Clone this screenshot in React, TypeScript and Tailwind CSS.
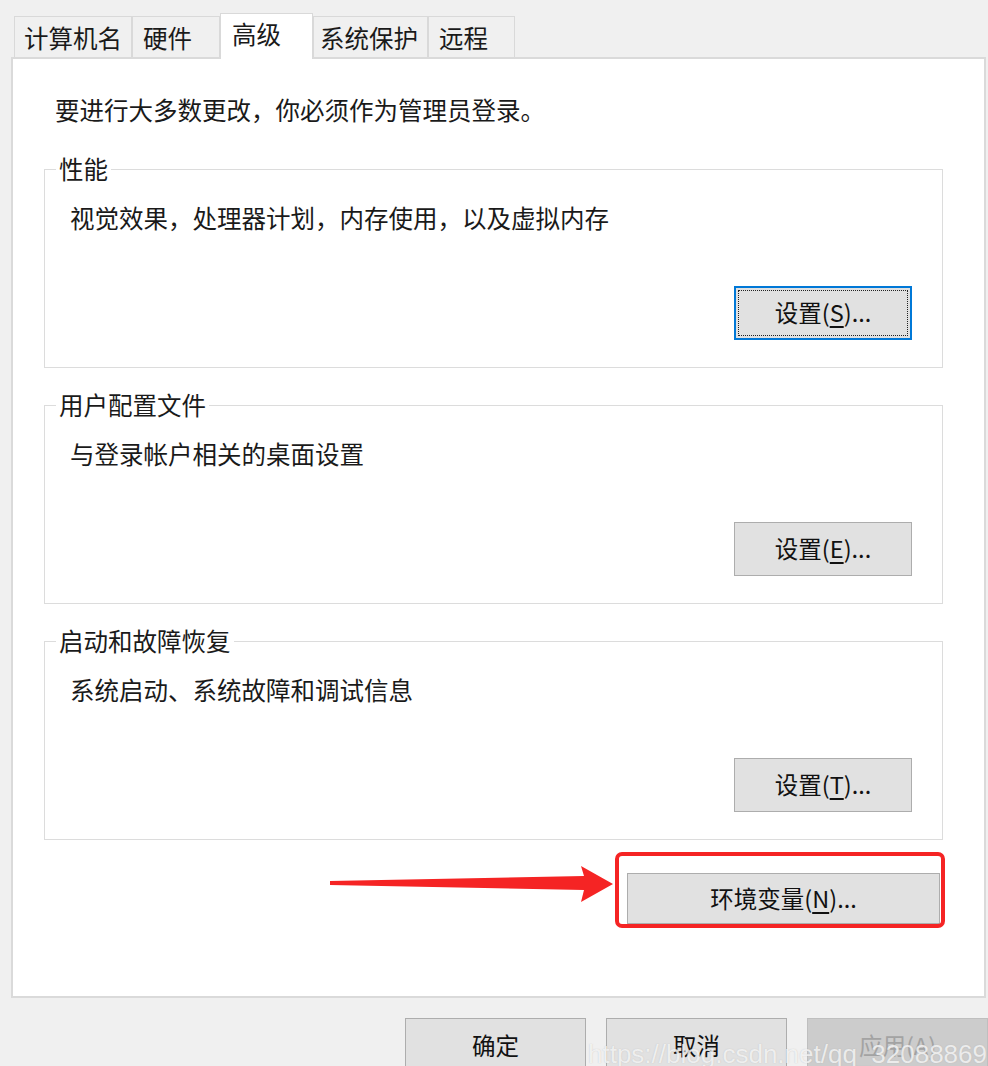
import React from "react";

const FONT = { fontFamily: '"Noto Sans CJK SC", "Noto Sans", sans-serif' };

function Tab({ label, w, selected, pl }: { label: string; w: number; selected?: boolean; pl: number }) {
  if (selected) {
    return (
      <div
        className="relative z-10 -mb-[2px] h-[46px] border border-b-0 border-[#d9d9d9] bg-white text-[24.5px] leading-[40px] text-[#1a1a1a]"
        style={{ width: w, paddingLeft: pl }}
      >
        {label}
      </div>
    );
  }
  return (
    <div
      className="h-[41px] border border-b-0 border-[#d9d9d9] bg-[#f0f0f0] text-[24.5px] leading-[42px] text-[#1a1a1a]"
      style={{ width: w, paddingLeft: pl }}
    >
      {label}
    </div>
  );
}

function Btn({ children, focused, w = 178, h = 54 }: { children: React.ReactNode; focused?: boolean; w?: number; h?: number }) {
  if (focused) {
    return (
      <div
        className="flex border-2 border-[#0078d7] bg-[#e1e1e1] p-[2px]"
        style={{ width: w, height: h }}
      >
        <div className="flex flex-1 items-center justify-center border border-dotted border-[#222] text-[23.5px] text-[#111]">
          {children}
        </div>
      </div>
    );
  }
  return (
    <div
      className="flex items-center justify-center border border-[#adadad] bg-[#e1e1e1] text-[23.5px] text-[#111]"
      style={{ width: w, height: h }}
    >
      {children}
    </div>
  );
}

function Group({ title, text, btn, focused }: { title: string; text: string; btn: React.ReactNode; focused?: boolean }) {
  return (
    <div className="relative ml-[31px] mr-[41px] flex h-[199px] flex-col border border-[#dcdcdc] pl-[25px] pr-[30px] pt-[34px]">
      <span className="absolute -top-[15px] left-[11px] bg-white px-[3px] text-[24.5px] leading-[28px] text-[#1a1a1a]">
        {title}
      </span>
      <div className="text-[24.5px] leading-[28px] text-[#1a1a1a]">{text}</div>
      <div className="mt-[54px] flex justify-end">
        <Btn focused={focused}>{btn}</Btn>
      </div>
    </div>
  );
}

export default function App() {
  return (
    <div className="relative h-[1066px] w-[988px] overflow-hidden bg-[#f0f0f0]" style={FONT}>
      {/* tabs */}
      <div className="flex items-end pl-[14px] pt-[13px]">
        <Tab label="计算机名" w={118} pl={9} />
        <Tab label="硬件" w={88} pl={10} />
        <Tab label="高级" w={93} pl={11} selected />
        <Tab label="系统保护" w={115} pl={6} />
        <Tab label="远程" w={87} pl={10} />
      </div>

      {/* panel */}
      <div className="mx-[11px] mr-[2px] h-[941px] border-2 border-[#dadada] bg-white">
        <div className="pl-[42px] pt-[37px] text-[24.5px] leading-[28px] text-[#1a1a1a]">
          要进行大多数更改，你必须作为管理员登录。
        </div>
        <div className="mt-[45px] flex flex-col gap-[37px]">
          <Group
            title="性能"
            text="视觉效果，处理器计划，内存使用，以及虚拟内存"
            focused
            btn={
              <span>
                设置(<span className="underline underline-offset-4">S</span>)...
              </span>
            }
          />
          <Group
            title="用户配置文件"
            text="与登录帐户相关的桌面设置"
            btn={
              <span>
                设置(<span className="underline underline-offset-4">E</span>)...
              </span>
            }
          />
          <Group
            title="启动和故障恢复"
            text="系统启动、系统故障和调试信息"
            btn={
              <span>
                设置(<span className="underline underline-offset-4">T</span>)...
              </span>
            }
          />
        </div>
        <div className="mr-[44px] mt-[33px] flex justify-end">
          <Btn w={313} h={51}>
            <span>
              环境变量(<span className="underline underline-offset-4">N</span>)...
            </span>
          </Btn>
        </div>
      </div>

      {/* bottom buttons */}
      <div className="mt-[20px] flex justify-end gap-[20px]">
        <Btn w={181} h={56}>确定</Btn>
        <Btn w={181} h={56}>取消</Btn>
        <div className="flex h-[56px] w-[181px] items-center justify-center border border-[#bfbfbf] bg-[#cccccc] text-[23.5px] text-[#a3a3a3]">
          应用(A)
        </div>
      </div>

      {/* annotation overlays */}
      <div className="absolute left-[615px] top-[852px] h-[76px] w-[330px] rounded-[7px] border-[4px] border-[#f52424]" />
      <svg className="absolute left-0 top-0" width="988" height="1066" style={{ pointerEvents: "none" }}>
        <polygon
          points="330,881 584,876 581,866 613,884 581,902 584,890 330,885"
          fill="#f52424"
        />
      </svg>
      <div
        className="absolute left-[588px] top-[1038px] text-[26px] leading-[32px] text-white/75 [text-shadow:0_0_1px_rgba(150,150,150,0.5)]"
        style={{ fontFamily: '"Liberation Sans", Arial, sans-serif' }}
      >
        https://blog.csdn.net/qq_32088869
      </div>
    </div>
  );
}
